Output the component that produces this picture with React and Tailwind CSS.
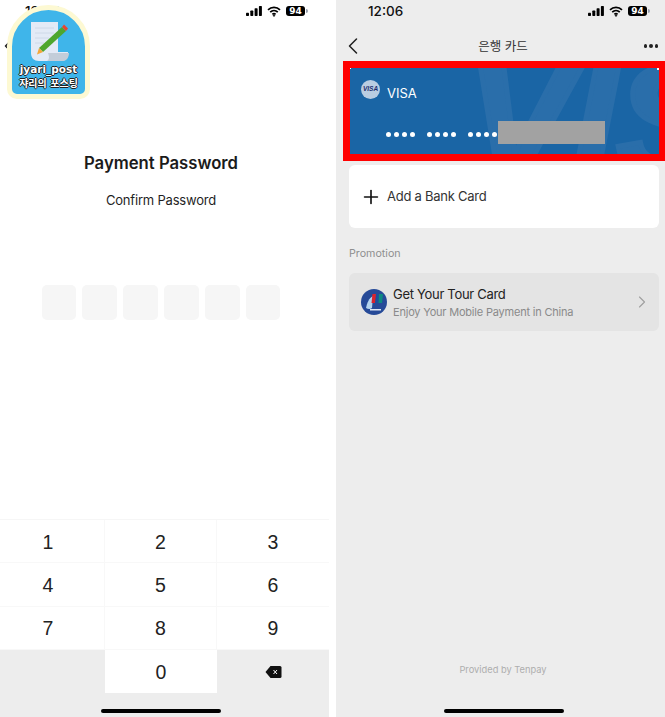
import { ChevronLeft, ChevronRight, Plus } from "lucide-react";

const KEYS = ["1", "2", "3", "4", "5", "6", "7", "8", "9"];
const FONT = "font-['Inter','Noto_Sans_CJK_KR',sans-serif]";

function StatusIcons() {
  return (
    <div className="flex items-center gap-[5px]">
      <svg width="16" height="10" viewBox="0 0 16 11" preserveAspectRatio="none">
        <rect x="0" y="7.5" width="3" height="3.5" rx="0.7" fill="#000" />
        <rect x="4.3" y="5" width="3" height="6" rx="0.7" fill="#000" />
        <rect x="8.6" y="2.5" width="3" height="8.5" rx="0.7" fill="#000" />
        <rect x="12.9" y="0" width="3" height="11" rx="0.7" fill="#000" />
      </svg>
      <svg width="14" height="11" viewBox="0 0 14 11" fill="none" stroke="#000" strokeWidth="1.7">
        <path d="M1 3.8a8.6 8.6 0 0 1 12 0" />
        <path d="M3.2 6.1a5.5 5.5 0 0 1 7.6 0" />
        <path d="M5.4 8.3a2.4 2.4 0 0 1 3.2 0" />
        <path d="M7 10.6l-1-1.2a1.5 1.5 0 0 1 2 0z" fill="#000" strokeWidth="0.6" />
      </svg>
      <div className="flex items-center">
        <div className="flex h-[10px] w-[19px] items-center justify-center rounded-[3px] bg-black font-['DejaVu_Sans',sans-serif] text-[9px] font-bold leading-[10px] text-white">
          94
        </div>
        <div className="ml-[1px] h-[4px] w-[2px] rounded-r-sm bg-gray-400" />
      </div>
    </div>
  );
}

function Sticker() {
  return (
    <div className="absolute left-[7px] top-[5px] h-[94px] w-[83px] rounded-t-[42px] rounded-b-[10px] border-[5px] border-[#fdf9d3] bg-[#3fb5ea]">
      <svg className="absolute left-[12px] top-[9px]" width="50" height="44" viewBox="0 0 50 44">
        <path d="M7 3h27v30H44c0 6-3 9-6 9H15c-5 0-8-3-8-8z" fill="#e3eaf6" />
        <path d="M24 34h21c0 5-3 8-6 8H23c3-2 2-5 1-8z" fill="#c3cdd9" />
        <path d="M11 9h19M11 14h19M11 19h14M11 24h9" stroke="#c9d5e6" strokeWidth="0.8" />
        <path d="M15 29 L38 8 L42 12 L19 33 Z" fill="#4ea62e" />
        <path d="M38 8 L40 5.500 L44 9.500 L42 12 Z" fill="#e8452f" />
        <path d="M15 29 L19 33 L13 35.500 Z" fill="#f4a63a" />
      </svg>
      <div className="absolute inset-x-0 top-[54px] text-center font-['DejaVu_Sans','Noto_Sans_CJK_KR',sans-serif] font-bold leading-none text-white [text-shadow:1px_0_0_#222,-1px_0_0_#222,0_1px_0_#222,0_-1px_0_#222]">
        <div className="whitespace-nowrap text-[10.500px]">jyari_post</div>
        <div className="mt-[4px] whitespace-nowrap text-[10px]">쟈리의 포스팅</div>
      </div>
    </div>
  );
}

function LeftPanel() {
  return (
    <div className={`relative flex h-full w-[329px] flex-col bg-white ${FONT}`}>
      <div className="flex h-[22px] items-center justify-between pl-[25px] pr-[21px]">
        <span className="text-[13.500px] font-medium text-[#111]">12:06</span>
        <StatusIcons />
      </div>

      <div className="relative h-[36px]">
        <ChevronLeft className="absolute left-[-5px] top-[10px] h-[28px] w-[28px] text-[#222]" strokeWidth={1.3} />
      </div>

      <div className="pr-[7px]">
        <h1 className="mt-[92px] text-center text-[16.700px] font-semibold leading-[26px] text-[#1b1b1b]">
          Payment Password
        </h1>
        <p className="mt-[13px] text-center text-[13px] leading-[22px] tracking-[-0.2px] text-[#1f1f1f]">
          Confirm Password
        </p>

        <div className="mt-[74px] flex justify-center gap-[6.500px]">
          {[0, 1, 2, 3, 4, 5].map((i) => (
            <div key={i} className="h-[35px] w-[34.400px] rounded-[5px] bg-[#f6f6f6]" />
          ))}
        </div>
      </div>

      <div className="mt-auto">
        <div className="grid grid-cols-[105px_112px_112px] border-t border-[#f6f6f6] font-['Liberation_Sans',sans-serif] text-[19.500px] text-[#222]">
          {KEYS.map((k) => (
            <div
              key={k}
              className="flex h-[43.300px] items-center justify-center border-b border-r border-[#f8f8f8] pt-[2px] [&:nth-child(3n)]:border-r-0 [&:nth-child(3n+1)]:pr-[8px]"
            >
              {k}
            </div>
          ))}
        </div>
        <div className="flex h-[67px] bg-[#ededed] font-['Liberation_Sans',sans-serif] text-[19.500px] text-[#222]">
          <div className="w-[105px]" />
          <div className="flex h-[43px] w-[112px] items-center justify-center bg-white pt-[2px]">0</div>
          <div className="flex h-[43px] flex-1 items-center justify-center">
            <svg width="17" height="14" viewBox="0 0 17 14">
              <path d="M5.500 1H15a1.500 1.500 0 0 1 1.500 1.500v9A1.500 1.500 0 0 1 15 13H5.500L.5 7z" fill="#111" />
              <path d="M8.500 5l3.500 4M12 5L8.500 9" stroke="#fff" strokeWidth="1" />
            </svg>
          </div>
        </div>
        <div className="absolute bottom-[4px] left-[101px] h-[4px] w-[120px] rounded-full bg-black" />
      </div>

      <Sticker />
    </div>
  );
}

function VisaCard() {
  return (
    <div className="ml-[7px] mt-[3px] h-[100px] border-y-[7px] border-l-[7px] border-r-[6px] border-[#ff0000]">
      <div className="relative h-full overflow-hidden bg-[#1a65a5] pl-[11px] pt-[12px]">
        <div className="absolute left-[117px] top-[-28px] whitespace-nowrap font-['Liberation_Sans',sans-serif] text-[158px] font-bold italic leading-none text-[#2a6eaa] [-webkit-text-stroke:5px_#2a6eaa]">
          VIS
        </div>
        <div className="absolute left-0 top-0 h-[1px] w-[1px] bg-white" />
        <div className="absolute right-0 top-0 h-[2px] w-[2px] bg-white" />

        <div className="relative flex h-[18px] items-center gap-[7px]">
          <div className="flex h-[19px] w-[19px] items-center justify-center rounded-full bg-[#b9cde2] font-['Liberation_Sans',sans-serif] text-[6.500px] font-bold italic text-[#1c2d6e]">
            VISA
          </div>
          <span className="mt-[7px] text-[13px] leading-[24px] text-white">VISA</span>
        </div>

        <div className="relative mt-[34px] flex items-center pl-[25px]">
          {[0, 1, 2].map((g) => (
            <div key={g} className="mr-[12px] flex gap-[3px]">
              {[0, 1, 2, 3].map((d) => (
                <div key={d} className="h-[5px] w-[5px] rounded-full bg-white" />
              ))}
            </div>
          ))}
        </div>

        <div className="absolute left-[148px] top-[53px] h-[23px] w-[107px] bg-[#a2a2a2]" />
      </div>
    </div>
  );
}

function RightPanel() {
  return (
    <div className={`relative flex h-full w-[329px] flex-col bg-[#ededed] ${FONT}`}>
      <div className="flex h-[22px] items-center justify-between pl-[32px] pr-[15px]">
        <span className="text-[13.500px] font-medium text-[#111]">12:06</span>
        <StatusIcons />
      </div>

      <div className="relative flex h-[36px] items-center justify-center pl-[5px] pt-[14px]">
        <ChevronLeft className="absolute left-[3px] top-[10px] h-[28px] w-[28px] text-[#222]" strokeWidth={1.3} />
        <span className="text-[12.500px] text-[#333]">은행 카드</span>
        <div className="absolute right-[7px] top-[22px] flex gap-[2px]">
          <div className="h-[3.500px] w-[3.500px] rounded-full bg-[#222]" />
          <div className="h-[3.500px] w-[3.500px] rounded-full bg-[#222]" />
          <div className="h-[3.500px] w-[3.500px] rounded-full bg-[#222]" />
        </div>
      </div>

      <VisaCard />

      <div className="ml-[13px] mr-[6px] mt-[4px] flex h-[63px] items-center gap-[5px] rounded-[6px] bg-white pl-[11px]">
        <Plus className="h-[22px] w-[22px] text-[#111]" strokeWidth={1.8} />
        <span className="text-[13px] tracking-[-0.25px] text-[#333]">Add a Bank Card</span>
      </div>

      <p className="ml-[13px] mr-[6px] mt-[18px] text-[10.700px] leading-[16px] text-[#8f8f8f]">Promotion</p>

      <div className="ml-[13px] mr-[6px] mt-[11px] flex h-[58px] items-center rounded-[6px] bg-[#e4e4e4] pl-[12px] pr-[7px]">
        <svg width="26" height="26" viewBox="0 0 26 26">
          <circle cx="13" cy="13" r="13" fill="#264a98" />
          <path d="M5 19C6 14 8 9 12 7l-1 12c-2 1.500-4 1-6 0z" fill="#b5d4ee" />
          <path d="M11.500 5h4l-1 9h-4z" fill="#d9232e" />
          <path d="M15 5h3.500l-1 9H14z" fill="#1c4f9c" />
          <path d="M18 5h4l-1 9h-3.500z" fill="#0d8a80" />
          <rect x="9" y="20" width="11" height="1.500" fill="#dfe8f5" />
        </svg>
        <div className="ml-[6px] flex-1">
          <p className="text-[13px] leading-[20px] tracking-[-0.3px] text-[#222]">Get Your Tour Card</p>
          <p className="text-[11px] leading-[16px] tracking-[-0.2px] text-[#8a8a8a]">Enjoy Your Mobile Payment in China</p>
        </div>
        <ChevronRight className="h-[20px] w-[20px] text-[#a0a0a0]" strokeWidth={1.4} />
      </div>

      <p className="mt-auto pl-[5px] text-center text-[9.300px] leading-[14px] text-[#aeaeae]">Provided by Tenpay</p>
      <div className="mb-[4px] ml-[108px] mt-[32px] h-[4px] w-[120px] rounded-full bg-black" />
    </div>
  );
}

export default function App() {
  return (
    <div className="flex h-[717px] w-[665px] justify-between overflow-hidden bg-white">
      <LeftPanel />
      <RightPanel />
    </div>
  );
}
